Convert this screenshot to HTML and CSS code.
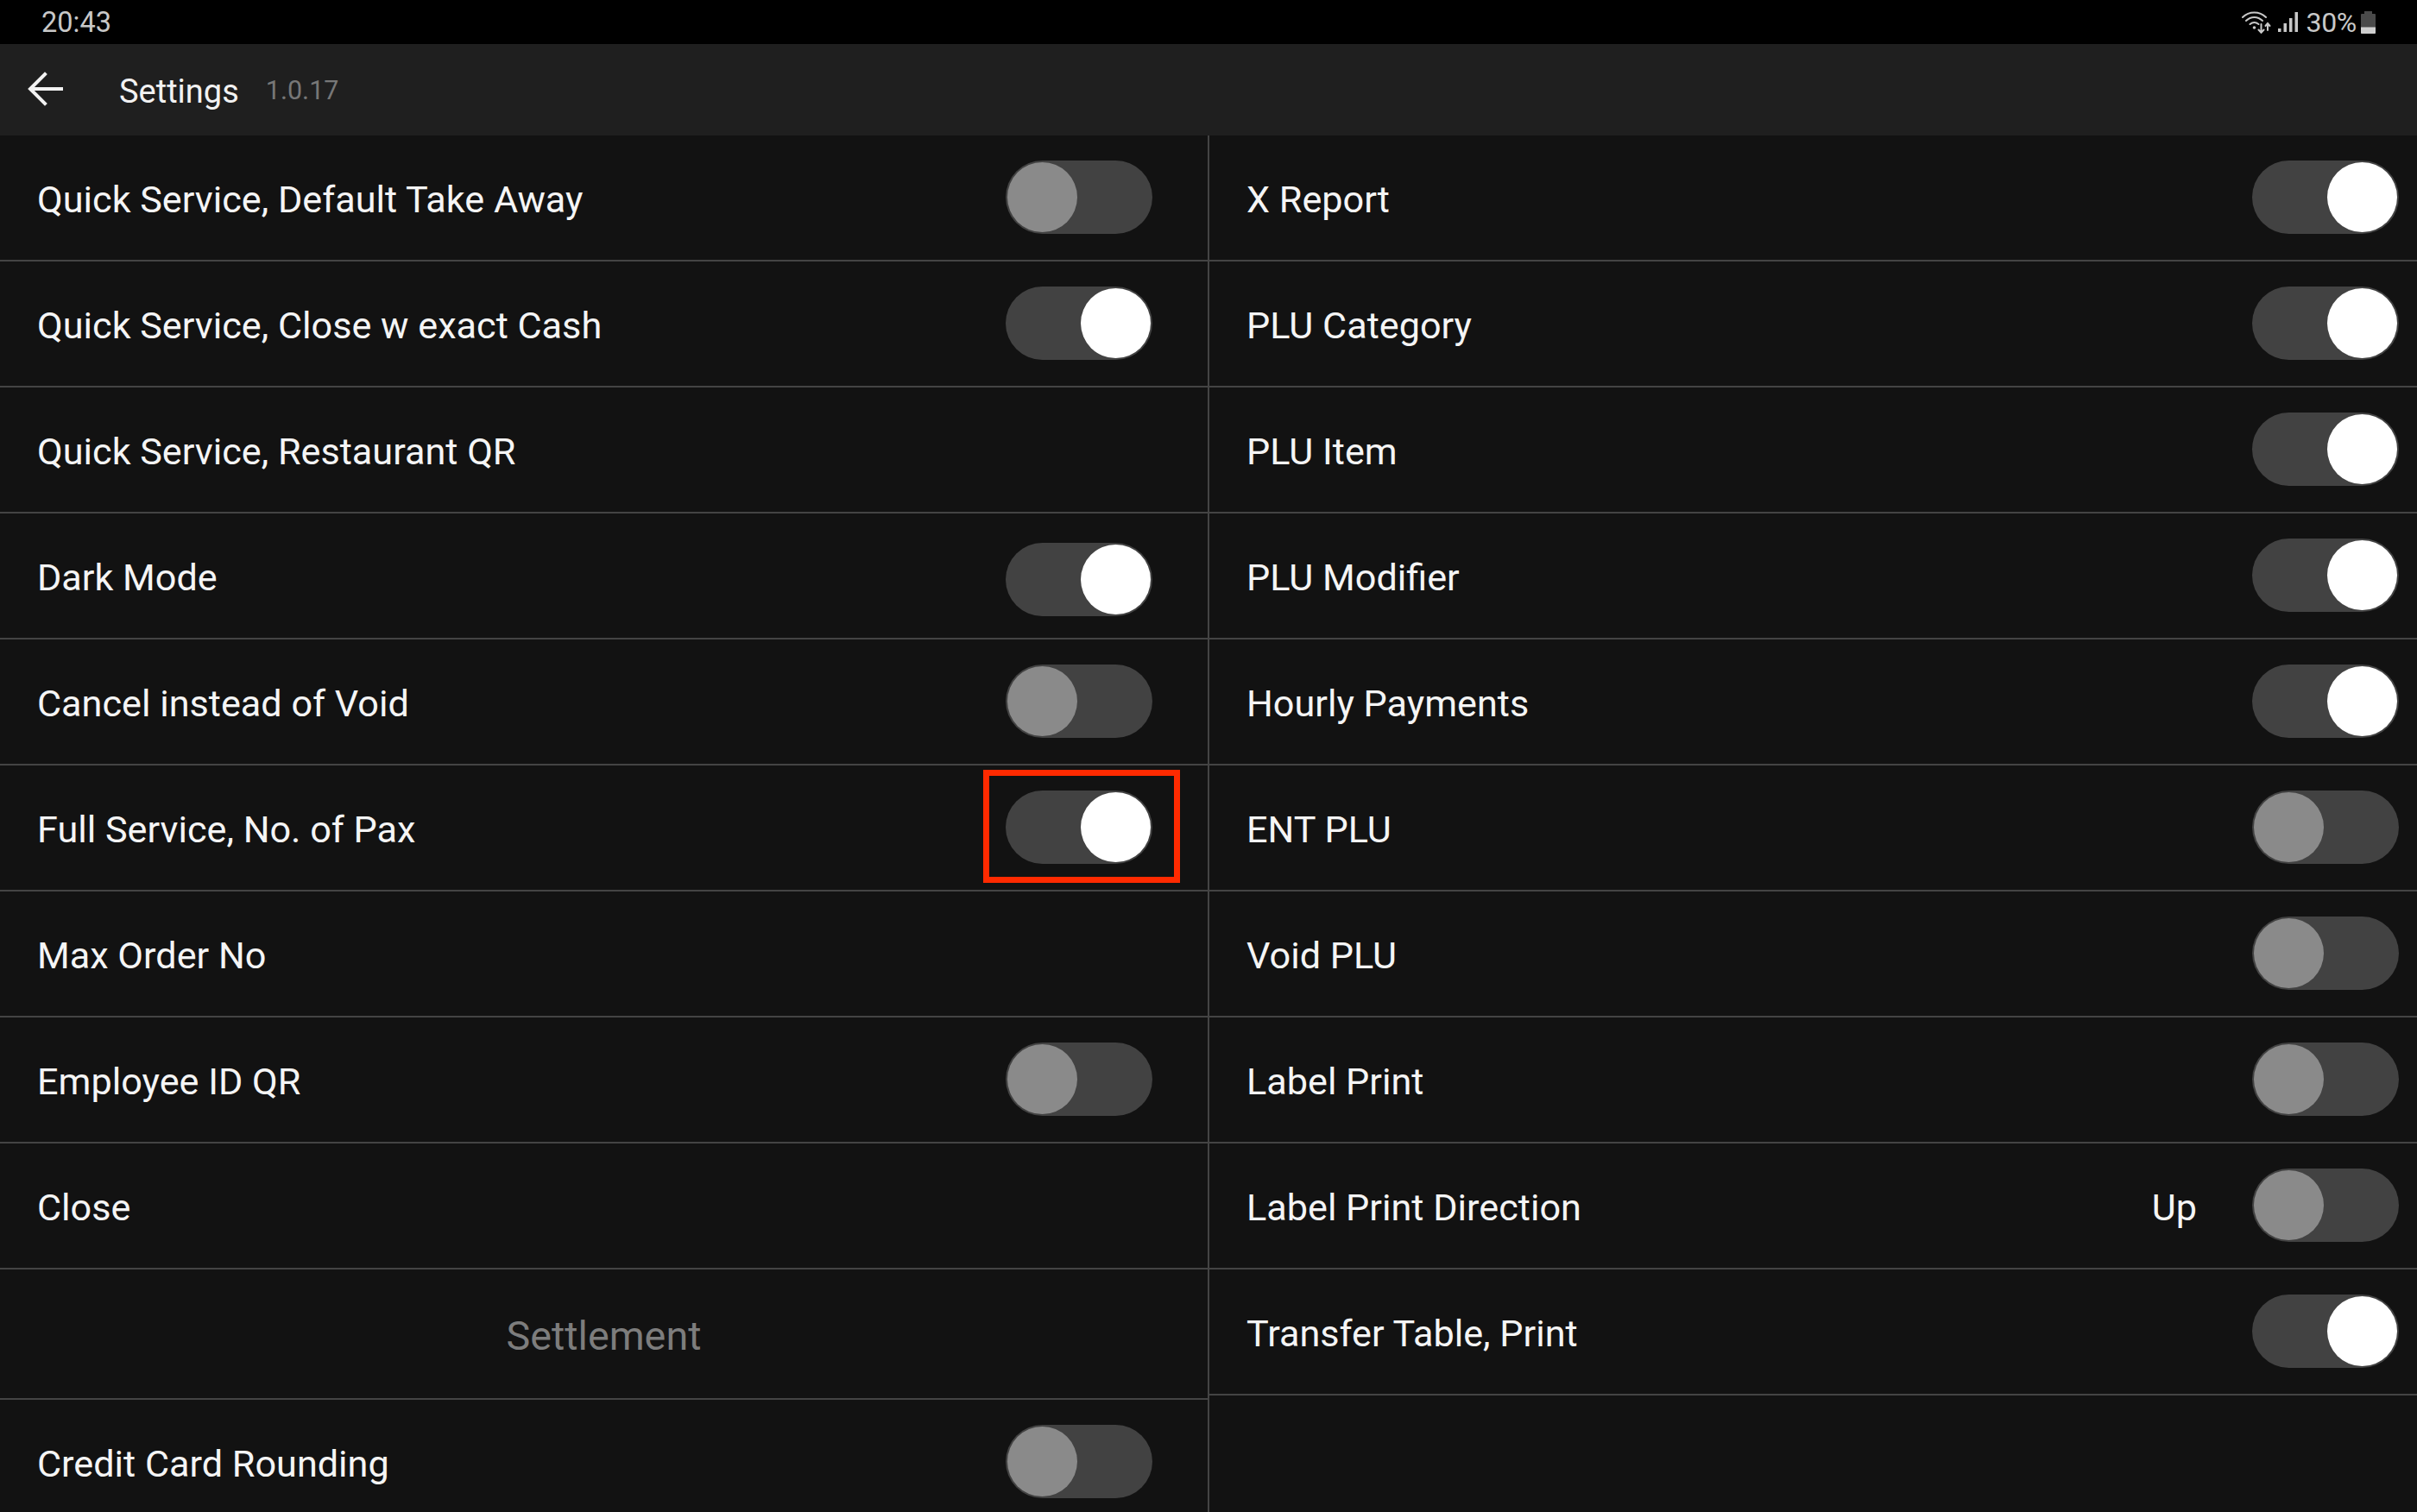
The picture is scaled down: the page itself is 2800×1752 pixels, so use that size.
FILE: index.html
```html
<!DOCTYPE html>
<html lang="en">
<head>
<meta charset="utf-8">
<title>Settings</title>
<link rel="stylesheet" href="styles.css">
</head>
<body>
<div class="screen">
  <header class="status">
    <span class="time">20:43</span>
    <div class="status-icons">
      <svg class="wifi" width="34" height="26" viewBox="0 0 34 26" fill="none" stroke="#c8c8c8" stroke-width="2" stroke-linecap="round">
        <path d="M1 7C8.500 -0.500 20.500 -0.500 28 7"/>
        <path d="M5 11C10.500 5.500 18.500 5.500 24 11"/>
        <path d="M9.500 15C12.500 12.500 16.500 12.500 19.500 15"/>
        <circle cx="14.500" cy="19" r="1.800" fill="#c8c8c8" stroke="none"/>
        <path d="M22.500 15V24.500M19.500 21.500L22.500 24.800L25.500 21.500"/>
        <path d="M30 22V14.500M27.500 17L30 14L32.500 17"/>
      </svg>
      <svg class="signal" width="23" height="23" viewBox="0 0 23 23" fill="#c8c8c8">
        <rect x="0" y="19" width="3.500" height="4"/>
        <rect x="6.500" y="13" width="3.500" height="10"/>
        <rect x="13" y="7" width="3.500" height="16"/>
        <rect x="19.500" y="0" width="3.500" height="23"/>
      </svg>
      <span class="battery-text">30%</span>
      <svg class="battery" width="17" height="26" viewBox="0 0 17 26">
        <path d="M4 0H13V3H16Q17 3 17 4V25Q17 26 16 26H1Q0 26 0 25V4Q0 3 1 3H4Z" fill="#4a4a4a"/>
        <path d="M0 18.500H17V25Q17 26 16 26H1Q0 26 0 25Z" fill="#cfcfcf"/>
      </svg>
    </div>
  </header>

  <div class="appbar">
    <svg class="back" width="42" height="42" viewBox="0 0 42 42" fill="none" stroke="#f2f2f2" stroke-width="4" stroke-linecap="square">
      <path d="M39 21H4"/>
      <path d="M20 4L3 21L20 38"/>
    </svg>
    <span class="title">Settings</span>
    <span class="version">1.0.17</span>
  </div>

  <main class="columns">
    <section class="col col-left">
      <div class="row"><span class="label">Quick Service, Default Take Away</span><span class="toggle"></span></div>
      <div class="row"><span class="label">Quick Service, Close w exact Cash</span><span class="toggle on"></span></div>
      <div class="row"><span class="label">Quick Service, Restaurant QR</span></div>
      <div class="row"><span class="label">Dark Mode</span><span class="toggle on toggle-low"></span></div>
      <div class="row"><span class="label">Cancel instead of Void</span><span class="toggle"></span></div>
      <div class="row"><span class="label">Full Service, No. of Pax</span><span class="toggle on"><span class="highlight"></span></span></div>
      <div class="row"><span class="label">Max Order No</span></div>
      <div class="row"><span class="label">Employee ID QR</span><span class="toggle"></span></div>
      <div class="row"><span class="label">Close</span></div>
      <div class="row row-section"><span class="section">Settlement</span></div>
      <div class="row row-last"><span class="label">Credit Card Rounding</span><span class="toggle"></span></div>
    </section>
    <section class="col col-right">
      <div class="row"><span class="label">X Report</span><span class="toggle on"></span></div>
      <div class="row"><span class="label">PLU Category</span><span class="toggle on"></span></div>
      <div class="row"><span class="label">PLU Item</span><span class="toggle on"></span></div>
      <div class="row"><span class="label">PLU Modifier</span><span class="toggle on"></span></div>
      <div class="row"><span class="label">Hourly Payments</span><span class="toggle on"></span></div>
      <div class="row"><span class="label">ENT PLU</span><span class="toggle"></span></div>
      <div class="row"><span class="label">Void PLU</span><span class="toggle"></span></div>
      <div class="row"><span class="label">Label Print</span><span class="toggle"></span></div>
      <div class="row"><span class="label">Label Print Direction</span><span class="value">Up</span><span class="toggle"></span></div>
      <div class="row"><span class="label">Transfer Table, Print</span><span class="toggle on"></span></div>
    </section>
  </main>
</div>
</body>
</html>
```
FILE: styles.css
```css
* { box-sizing: border-box; }
html, body { margin: 0; padding: 0; background: #121212; }
body { font-family: Roboto, "Liberation Sans", sans-serif; }

.screen {
  width: 2800px;
  height: 1752px;
  display: flex;
  flex-direction: column;
  overflow: hidden;
  background: #121212;
}

.status {
  height: 51px;
  flex: none;
  background: #000;
  display: flex;
  align-items: center;
  justify-content: space-between;
  padding: 0 48px;
  color: #c8c8c8;
}
.time { font-size: 32.5px; line-height: 51px; padding-top: 2px; }
.status-icons { display: flex; align-items: center; gap: 8px; }
.battery-text { font-size: 32px; line-height: 51px; letter-spacing: -0.3px; margin-left: 1px; margin-right: -3px; padding-top: 1px; }
.signal { margin-top: -1px; }

.appbar {
  height: 106px;
  flex: none;
  background: #1f1f1f;
  display: flex;
  align-items: center;
  padding-left: 32px;
}
.back { flex: none; margin-bottom: 2px; }
.title { margin-left: 64px; margin-top: 4px; font-size: 38px; color: #f2f2f2; }
.version { margin-left: 31px; font-size: 30.5px; color: #777; }

.columns { flex: 1; display: flex; min-height: 0; }
.col { display: flex; flex-direction: column; }
.col-left { width: 1401px; flex: none; border-right: 2px solid #444; }
.col-right { flex: 1; min-width: 0; }

.row {
  flex: none;
  height: 146px;
  display: flex;
  align-items: center;
  padding-left: 43px;
  border-bottom: 2px solid #444;
  color: #f5f5f5;
  font-size: 43.2px;
}
.col-left .row { padding-right: 64px; }
.col-right .row { padding-left: 43px; padding-right: 21px; }
.label { flex: 1; white-space: nowrap; padding-top: 4px; }
.value { margin-right: 64px; padding-top: 4px; }

.row-section { height: 151px; justify-content: center; padding-left: 0; }
.col-left .row-section { padding-right: 0; }
.section { font-size: 46.7px; color: #7d7d7d; padding-top: 4px; }
.row-last { border-bottom-color: transparent; }

.toggle {
  position: relative;
  flex: none;
  width: 170px;
  height: 85px;
  margin-bottom: 1px;
  border-radius: 43px;
  background: #424242;
}
.toggle-low { margin-top: 9px; margin-bottom: 0; }
.toggle::after {
  content: "";
  position: absolute;
  top: 2px;
  left: 2px;
  width: 81px;
  height: 81px;
  border-radius: 50%;
  background: #8a8a8a;
}
.toggle.on::after { left: 87px; background: #fff; }

.highlight {
  position: absolute;
  left: -26px;
  right: -32px;
  top: -24px;
  bottom: -22px;
  border: 7px solid #ff2a00;
}
```
